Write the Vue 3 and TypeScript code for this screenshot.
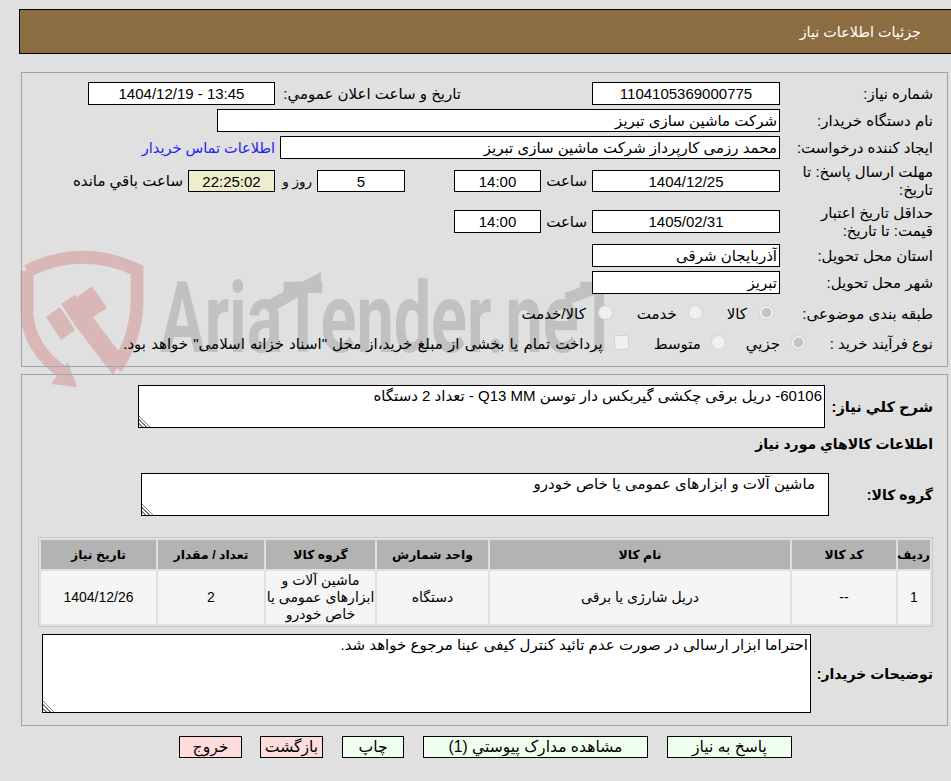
<script setup lang="ts">
interface Row { no: string; code: string; name: string; unit: string; group: string; qty: string; date: string }
const rows: Row[] = [
  { no: '1', code: '--', name: 'دریل شارژی یا برقی', unit: 'دستگاه', group: 'ماشین آلات و\nابزارهای عمومی یا\nخاص خودرو', qty: '2', date: '1404/12/26' },
]
</script>

<template>
  <div class="page" dir="rtl">
    <svg class="mark" width="951" height="781" viewBox="0 0 951 781" aria-hidden="true">
      <g fill="#d9b7b7">
        <path d="M27 271 Q82 244 137 270 L137 305 Q135 340 116 368" fill="none" stroke="#d9b7b7" stroke-width="13" />
        <path d="M27 271 L27 315 Q30 350 64 373" fill="none" stroke="#d9b7b7" stroke-width="13" />
        <polygon points="68,362 77,387 51,384" />
        <polygon points="46,317 60,307 75,330 61,340" />
        <polygon points="61,304 75,295 95,320 123,357 113,375 77,328" />
        <polygon points="77,297 92,286 107,308 90,319" />
      </g>
      <g fill="#c1c1c1">
        <text x="160" y="352" font-family="Roboto, sans-serif" font-weight="700" font-size="98" textLength="460" lengthAdjust="spacingAndGlyphs" direction="ltr">AriaTender.neT</text>
        <polygon points="268,300 321,272 321,284 272,312" />
        <polygon points="565,293 618,273 618,286 565,306" />
      </g>
    </svg>

    <header class="title">جزئیات اطلاعات نیاز</header>

    <section class="panel panel-info">
      <div class="row row-1">
        <div class="label">شماره نیاز:</div>
        <div class="box w188 center">1104105369000775</div>
        <div class="label label-public">تاریخ و ساعت اعلان عمومي:</div>
        <div class="box w187 center" dir="ltr">1404/12/19 - 13:45</div>
      </div>
      <div class="row row-n">
        <div class="label">نام دستگاه خریدار:</div>
        <div class="box w563">شرکت ماشین سازی تبریز</div>
      </div>
      <div class="row row-n">
        <div class="label">ایجاد کننده درخواست:</div>
        <div class="box w500">محمد رزمی کارپرداز شرکت ماشین سازی تبریز</div>
        <a class="contact">اطلاعات تماس خریدار</a>
      </div>
      <div class="row row-deadline">
        <div class="label two">مهلت ارسال پاسخ: تا تاریخ:</div>
        <div class="box w188 center">1404/12/25</div>
        <div class="hour">ساعت</div>
        <div class="box w87 center">14:00</div>
        <div class="box w88 center days">5</div>
        <div class="day-label">روز و</div>
        <div class="box w87 center timer">22:25:02</div>
        <div class="remain">ساعت باقي مانده</div>
      </div>
      <div class="row row-valid">
        <div class="label two">حداقل تاریخ اعتبار قیمت: تا تاریخ:</div>
        <div class="box w188 center">1405/02/31</div>
        <div class="hour">ساعت</div>
        <div class="box w87 center">14:00</div>
      </div>
      <div class="row row-province">
        <div class="label">استان محل تحویل:</div>
        <div class="box w188">آذربایجان شرقی</div>
      </div>
      <div class="row row-n">
        <div class="label">شهر محل تحویل:</div>
        <div class="box w188">تبریز</div>
      </div>
      <div class="row row-cat">
        <div class="label">طبقه بندی موضوعی:</div>
        <label class="opt opt-a"><input type="radio" name="cat" checked disabled /><span>کالا</span></label>
        <label class="opt opt-b"><input type="radio" name="cat" disabled /><span>خدمت</span></label>
        <label class="opt opt-c"><input type="radio" name="cat" disabled /><span>کالا/خدمت</span></label>
      </div>
      <div class="row row-proc">
        <div class="label label-proc">نوع فرآیند خرید :</div>
        <label class="opt opt-d"><input type="radio" name="proc" checked disabled /><span>جزیي</span></label>
        <label class="opt opt-e"><input type="radio" name="proc" disabled /><span>متوسط</span></label>
        <label class="opt opt-f"><input type="checkbox" disabled /><span class="wide">پرداخت تمام یا بخشی از مبلغ خرید،از محل "اسناد خزانه اسلامی" خواهد بود.</span></label>
      </div>
    </section>

    <section class="panel panel-goods">
      <div class="row row-desc">
        <div class="label strong">شرح کلي نیاز:</div>
        <textarea class="area area-desc" readonly>60106- دریل برقی چکشی گیربکس دار توسن Q13 MM - تعداد 2 دستگاه</textarea>
      </div>
      <h3 class="sub">اطلاعات کالاهاي مورد نیاز</h3>
      <div class="row row-group">
        <div class="label strong label-group">گروه کالا:</div>
        <textarea class="area area-group" readonly>ماشین آلات و ابزارهای عمومی یا خاص خودرو</textarea>
      </div>
      <table class="grid">
        <colgroup>
          <col class="c1" /><col class="c2" /><col class="c3" /><col class="c4" /><col class="c5" /><col class="c6" /><col class="c7" />
        </colgroup>
        <thead>
          <tr>
            <th>ردیف</th><th>کد کالا</th><th>نام کالا</th><th>واحد شمارش</th><th>گروه کالا</th><th>تعداد / مقدار</th><th>تاریخ نیاز</th>
          </tr>
        </thead>
        <tbody>
          <tr v-for="r in rows" :key="r.no">
            <td>{{ r.no }}</td><td>{{ r.code }}</td><td>{{ r.name }}</td><td>{{ r.unit }}</td><td class="wrap">{{ r.group }}</td><td>{{ r.qty }}</td><td>{{ r.date }}</td>
          </tr>
        </tbody>
      </table>
      <div class="row row-notes">
        <div class="label strong label-notes">توضیحات خریدار:</div>
        <textarea class="area area-notes" readonly>احتراما ابزار ارسالی در صورت عدم تائید کنترل کیفی عینا مرجوع خواهد شد.</textarea>
      </div>
    </section>

    <footer class="actions">
      <button class="btn ok b-reply" type="button">پاسخ به نیاز</button>
      <button class="btn ok b-docs" type="button">مشاهده مدارک پیوستي (1)</button>
      <button class="btn ok b-print" type="button">چاپ</button>
      <button class="btn no b-back" type="button">بازگشت</button>
      <button class="btn no b-exit" type="button">خروج</button>
    </footer>
  </div>
</template>

<style scoped>
.page {
  position: relative;
  width: 951px;
  height: 781px;
  overflow: hidden;
  background: #e0e0e0;
  color: #000;
  font-family: "Liberation Sans", "DejaVu Sans", sans-serif;
  font-size: 15px;
  box-sizing: border-box;
  padding-top: 9px;
}
.mark { position: absolute; left: 0; top: 0; }
.title {
  position: relative;
  box-sizing: border-box;
  height: 45px;
  width: 935px;
  margin-right: -3px;
  margin-left: 19px;
  padding-right: 32px;
  background: #8c6d42;
  border: 1px solid #000;
  color: #fff;
  font-size: 14.4px;
  line-height: 45px;
}
.panel {
  position: relative;
  box-sizing: border-box;
  width: 927px;
  margin-right: 3px;
  border: 1px solid #a3a3a3;
  padding-right: 14px;
}
.panel-info { margin-top: 18px; height: 295px; padding-top: 9px; }
.panel-goods { margin-top: 7px; height: 352px; padding-top: 10px; }
.row { display: flex; align-items: center; }
.row-1 { height: 23px; }
.row-n { height: 23px; margin-top: 4px; }
.row-deadline { height: 22px; margin-top: 11px; }
.row-valid { height: 23px; margin-top: 18px; }
.row-province { height: 23px; margin-top: 11px; }
.row-cat { height: 24px; margin-top: 8px; }
.row-proc { height: 24px; margin-top: 6px; }
.label { box-sizing: border-box; width: 153px; flex: none; line-height: 18px; }
.two { padding-left: 14px; }
.label-proc { width: 127px; }
.box {
  box-sizing: border-box;
  flex: none;
  height: 100%;
  background: #fff;
  border: 1px solid #000;
  padding: 0 2px;
  line-height: 22px;
  white-space: nowrap;
  overflow: hidden;
}
.center { text-align: center; }
.w188 { width: 188px; }
.w187 { width: 187px; }
.w563 { width: 563px; }
.w500 { width: 500px; }
.w87 { width: 87px; }
.w88 { width: 88px; }
.label-public { margin-right: 131px; margin-left: 5px; width: 181px; white-space: nowrap; }
.contact { margin-right: 5px; color: #2222ee; font-size: 14.5px; white-space: nowrap; }
.hour { width: 51px; flex: none; padding-right: 5px; box-sizing: border-box; }
.days { margin-right: 49px; }
.day-label { width: 42px; flex: none; box-sizing: border-box; padding-right: 5px; font-size: 13.5px; }
.timer { background: #eeeecc; }
.remain { margin-right: 5px; white-space: nowrap; }
.opt { display: flex; align-items: center; white-space: nowrap; }
.opt input {
  appearance: none;
  box-sizing: border-box;
  width: 15px;
  height: 15px;
  margin: 0 0 4px;
  flex: none;
  background: #f0f0f0;
  border: 1px solid #d2d2d2;
}
.opt input[type="radio"] { border-radius: 50%; }
.opt input[type="checkbox"] { border-radius: 3px; }
.opt input:checked { background: radial-gradient(circle, #c4c4c4 0 4.5px, #f2f2f2 5.2px); }
.opt span { display: block; }
.wide { word-spacing: 1px; }
.opt-a { margin-right: 6px; gap: 12px; }
.opt-b { margin-right: 24px; gap: 11px; }
.opt-c { margin-right: 24px; gap: 12px; }
.opt-d { margin-right: 0; gap: 11px; }
.opt-e { margin-right: 20px; gap: 10px; }
.opt-f { margin-right: 25px; gap: 11px; }
.strong, .sub { font-weight: 700; font-size: 14px; }
.area {
  display: block;
  box-sizing: border-box;
  flex: none;
  background: #fff;
  border: 1px solid #000;
  padding: 1px 2px;
  margin: 0;
  border-radius: 0;
  outline: none;
  font: inherit;
  color: #000;
}
.area::-webkit-resizer {
  background: linear-gradient(45deg, transparent 0 2px, #808080 2px 3.2px, transparent 3.2px 4.6px, #808080 4.6px 5.8px, transparent 5.8px 7.2px, #808080 7.2px 8.4px, transparent 8.4px);
}
.row-desc { height: 43px; }
.row-desc .label { width: 108px; font-size: 14.6px; }
.area-desc { width: 687px; height: 43px; }
.sub { margin: 7px 0 0; height: 22px; line-height: 18px; }
.row-group { height: 43px; margin-top: 16px; }
.label-group { width: 104px; }
.area-group { width: 688px; height: 43px; padding-right: 13px; }
.grid {
  box-sizing: border-box;
  width: 895px;
  margin-top: 21px;
  table-layout: fixed;
  border: 1px solid #c8c8c8;
  border-collapse: separate;
  border-spacing: 2px;
  text-align: center;
  font-size: 14px;
}
.c1 { width: 32px; } .c2 { width: 104px; } .c3 { width: 300px; } .c4 { width: 111px; } .c5 { width: 109px; } .c6 { width: 106px; } .c7 { width: 115px; }
.grid th { height: 29px; padding: 0; background: #b3b3b3; font-size: 12.4px; font-weight: 700; }
.grid td { height: 53px; padding: 0; background: #f5f5f5; line-height: 17px; }
.grid .wrap { white-space: pre-line; }
.row-notes { height: 79px; margin-top: 7px; }
.label-notes { width: 122px; }
.area-notes { width: 769px; height: 79px; }
.actions { position: relative; display: flex; margin-top: 10px; height: 22px; }
.btn {
  box-sizing: border-box;
  flex: none;
  height: 22px;
  border: 1px solid #000;
  border-radius: 0;
  padding: 0;
  font: inherit;
  font-size: 15.6px;
  color: #000;
}
.ok { background: #eeffee; }
.no { background: #ffdddd; }
.b-reply { width: 125px; margin-right: 159px; }
.b-docs { width: 225px; margin-right: 19px; }
.b-print { width: 62px; margin-right: 19px; }
.b-back { width: 63px; margin-right: 19px; }
.b-exit { width: 63px; margin-right: 18px; }
</style>
